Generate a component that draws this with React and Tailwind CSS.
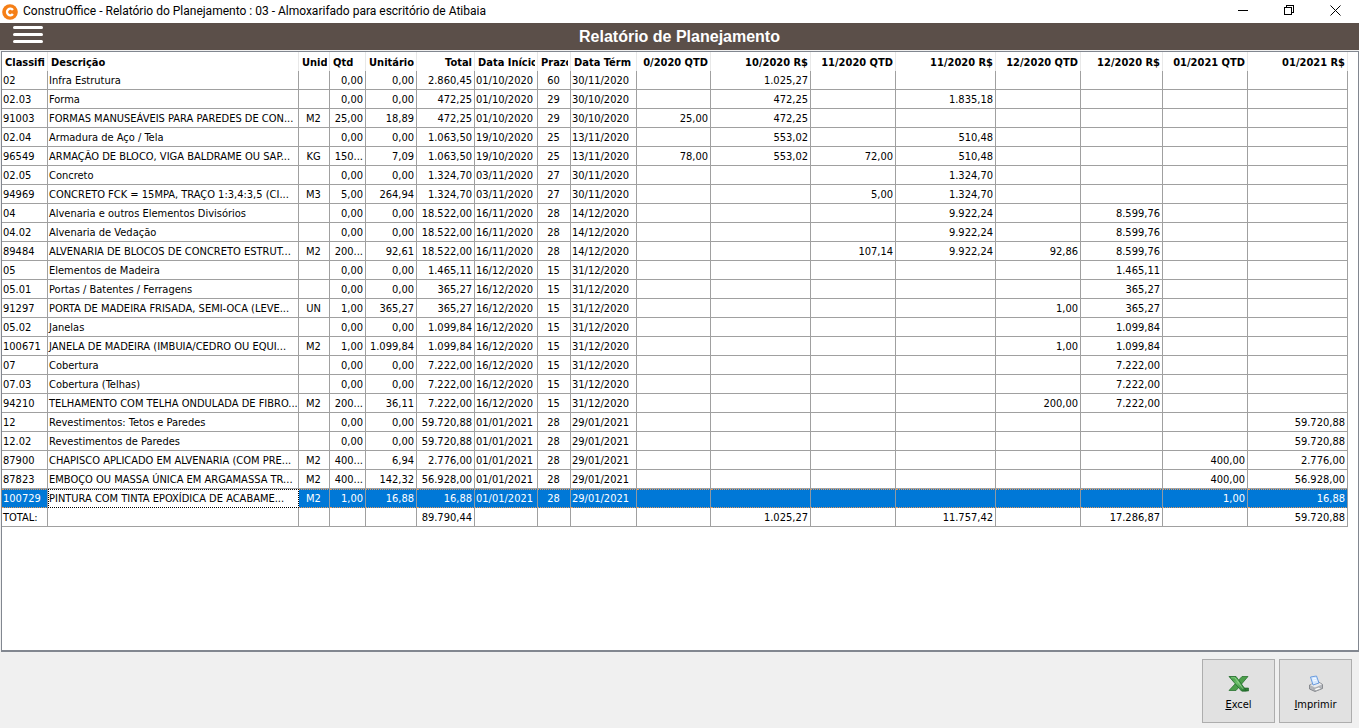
const columns = [
  { title: "Classifi", width: "w-[46px]", head: "justify-start", cell: "text-left" },
  { title: "Descrição", width: "w-[251px]", head: "justify-start", cell: "text-left" },
  { title: "Unid", width: "w-[31px]", head: "justify-start", cell: "text-center" },
  { title: "Qtd", width: "w-[36px]", head: "justify-start", cell: "text-right" },
  { title: "Unitário", width: "w-[51px]", head: "justify-end", cell: "text-right" },
  { title: "Total", width: "w-[58px]", head: "justify-end", cell: "text-right" },
  { title: "Data Início", width: "w-[63px]", head: "justify-start", cell: "text-left" },
  { title: "Prazo", width: "w-[33px]", head: "justify-start", cell: "text-center" },
  { title: "Data Térm", width: "w-[66px]", head: "justify-start", cell: "text-left" },
  { title: "0/2020 QTD", width: "w-[74px]", head: "justify-end", cell: "text-right" },
  { title: "10/2020 R$", width: "w-[100px]", head: "justify-end", cell: "text-right" },
  { title: "11/2020 QTD", width: "w-[85px]", head: "justify-end", cell: "text-right" },
  { title: "11/2020 R$", width: "w-[100px]", head: "justify-end", cell: "text-right" },
  { title: "12/2020 QTD", width: "w-[85px]", head: "justify-end", cell: "text-right" },
  { title: "12/2020 R$", width: "w-[82px]", head: "justify-end", cell: "text-right" },
  { title: "01/2021 QTD", width: "w-[85px]", head: "justify-end", cell: "text-right" },
  { title: "01/2021 R$", width: "w-[100px]", head: "justify-end", cell: "text-right" },
];

const rows = [
  ["02", "Infra Estrutura", "", "0,00", "0,00", "2.860,45", "01/10/2020", "60", "30/11/2020", "", "1.025,27", "", "", "", "", "", ""],
  ["02.03", "Forma", "", "0,00", "0,00", "472,25", "01/10/2020", "29", "30/10/2020", "", "472,25", "", "1.835,18", "", "", "", ""],
  ["91003", "FORMAS MANUSEÁVEIS PARA PAREDES DE CON...", "M2", "25,00", "18,89", "472,25", "01/10/2020", "29", "30/10/2020", "25,00", "472,25", "", "", "", "", "", ""],
  ["02.04", "Armadura de Aço / Tela", "", "0,00", "0,00", "1.063,50", "19/10/2020", "25", "13/11/2020", "", "553,02", "", "510,48", "", "", "", ""],
  ["96549", "ARMAÇÃO DE BLOCO, VIGA BALDRAME OU SAP...", "KG", "150...", "7,09", "1.063,50", "19/10/2020", "25", "13/11/2020", "78,00", "553,02", "72,00", "510,48", "", "", "", ""],
  ["02.05", "Concreto", "", "0,00", "0,00", "1.324,70", "03/11/2020", "27", "30/11/2020", "", "", "", "1.324,70", "", "", "", ""],
  ["94969", "CONCRETO FCK = 15MPA, TRAÇO 1:3,4:3,5 (CI...", "M3", "5,00", "264,94", "1.324,70", "03/11/2020", "27", "30/11/2020", "", "", "5,00", "1.324,70", "", "", "", ""],
  ["04", "Alvenaria e outros Elementos Divisórios", "", "0,00", "0,00", "18.522,00", "16/11/2020", "28", "14/12/2020", "", "", "", "9.922,24", "", "8.599,76", "", ""],
  ["04.02", "Alvenaria de Vedação", "", "0,00", "0,00", "18.522,00", "16/11/2020", "28", "14/12/2020", "", "", "", "9.922,24", "", "8.599,76", "", ""],
  ["89484", "ALVENARIA DE BLOCOS DE CONCRETO ESTRUT...", "M2", "200...", "92,61", "18.522,00", "16/11/2020", "28", "14/12/2020", "", "", "107,14", "9.922,24", "92,86", "8.599,76", "", ""],
  ["05", "Elementos de Madeira", "", "0,00", "0,00", "1.465,11", "16/12/2020", "15", "31/12/2020", "", "", "", "", "", "1.465,11", "", ""],
  ["05.01", "Portas / Batentes / Ferragens", "", "0,00", "0,00", "365,27", "16/12/2020", "15", "31/12/2020", "", "", "", "", "", "365,27", "", ""],
  ["91297", "PORTA DE MADEIRA FRISADA, SEMI-OCA (LEVE...", "UN", "1,00", "365,27", "365,27", "16/12/2020", "15", "31/12/2020", "", "", "", "", "1,00", "365,27", "", ""],
  ["05.02", "Janelas", "", "0,00", "0,00", "1.099,84", "16/12/2020", "15", "31/12/2020", "", "", "", "", "", "1.099,84", "", ""],
  ["100671", "JANELA DE MADEIRA (IMBUIA/CEDRO OU EQUI...", "M2", "1,00", "1.099,84", "1.099,84", "16/12/2020", "15", "31/12/2020", "", "", "", "", "1,00", "1.099,84", "", ""],
  ["07", "Cobertura", "", "0,00", "0,00", "7.222,00", "16/12/2020", "15", "31/12/2020", "", "", "", "", "", "7.222,00", "", ""],
  ["07.03", "Cobertura (Telhas)", "", "0,00", "0,00", "7.222,00", "16/12/2020", "15", "31/12/2020", "", "", "", "", "", "7.222,00", "", ""],
  ["94210", "TELHAMENTO COM TELHA ONDULADA DE FIBRO...", "M2", "200...", "36,11", "7.222,00", "16/12/2020", "15", "31/12/2020", "", "", "", "", "200,00", "7.222,00", "", ""],
  ["12", "Revestimentos: Tetos e Paredes", "", "0,00", "0,00", "59.720,88", "01/01/2021", "28", "29/01/2021", "", "", "", "", "", "", "", "59.720,88"],
  ["12.02", "Revestimentos de Paredes", "", "0,00", "0,00", "59.720,88", "01/01/2021", "28", "29/01/2021", "", "", "", "", "", "", "", "59.720,88"],
  ["87900", "CHAPISCO APLICADO EM ALVENARIA (COM PRE...", "M2", "400...", "6,94", "2.776,00", "01/01/2021", "28", "29/01/2021", "", "", "", "", "", "", "400,00", "2.776,00"],
  ["87823", "EMBOÇO OU MASSA ÚNICA EM ARGAMASSA TR...", "M2", "400...", "142,32", "56.928,00", "01/01/2021", "28", "29/01/2021", "", "", "", "", "", "", "400,00", "56.928,00"],
  ["100729", "PINTURA COM TINTA EPOXÍDICA DE ACABAME...", "M2", "1,00", "16,88", "16,88", "01/01/2021", "28", "29/01/2021", "", "", "", "", "", "", "1,00", "16,88"],
];

const totals = ["TOTAL:", "", "", "", "", "89.790,44", "", "", "", "", "1.025,27", "", "11.757,42", "", "17.286,87", "", "59.720,88"];

const selectedCode = "100729";

const cellBase = "h-[19px] overflow-hidden pr-[2px] pb-0 pl-[1px] whitespace-nowrap";
const cellPlain = "border-r border-b border-[#a0a0a0] pt-[2px]";
const cellSelected = "border-y border-r border-y-[#e39a5f] border-r-[#8f99a3] pt-[1px] [border-style:dotted_solid]";
const cellFocused =
  "border-y border-r border-white bg-white pt-[1px] text-black outline-1 -outline-offset-1 outline-dotted outline-black";

function AppLogo() {
  return (
    <svg width="16" height="16" viewBox="0 0 16 16" aria-hidden="true">
      <circle cx="8" cy="8" r="7.8" fill="#f57f17" />
      <path d="M10.9 6A3.3 3.3 0 1 0 10.9 10" fill="none" stroke="#fff" strokeWidth="2.3" />
    </svg>
  );
}

function ExcelIcon() {
  return (
    <svg width="22" height="18" viewBox="0 0 22 18" aria-hidden="true">
      <defs>
        <linearGradient id="excelFront" x1="0" y1="0" x2="1" y2="1">
          <stop offset="0" stopColor="#2f8c35" />
          <stop offset="0.45" stopColor="#6cc06a" />
          <stop offset="1" stopColor="#1f6d2a" />
        </linearGradient>
      </defs>
      <path d="M14 1.500h6L8 15.500H1z" fill="#4c9f4b" stroke="#2a7331" strokeWidth="0.8" />
      <path d="M16 13h4.500v3H14z" fill="#2f7d36" stroke="#1b5a24" strokeWidth="0.6" />
      <path d="M1 1.500h7L18.500 16h-5z" fill="url(#excelFront)" stroke="#1f6b2a" strokeWidth="0.8" />
      <path d="M3 2.800h4l8 11" fill="none" stroke="#a5dd9c" strokeWidth="0.7" />
    </svg>
  );
}

function PrinterIcon() {
  return (
    <svg width="16" height="18" viewBox="0 0 16 18" aria-hidden="true">
      <path d="M1.500 10L10 6.500l4.500 3v4L7 16.500l-5.500-2.500z" fill="#b4b7bc" stroke="#777a80" strokeWidth="0.8" />
      <path d="M2 10l8-3 4 2.500-7 3z" fill="#e9eaec" />
      <path d="M2.500 2l6-1 2.500 7-6 2z" fill="#d5e8ff" stroke="#5f94dd" strokeWidth="0.9" />
      <path d="M4.500 4l3.500-.6M5 6l3.700-.8" stroke="#fff" strokeWidth="0.8" />
      <path d="M5.500 14l5.500-2 2.500 1.500-5.500 2.200z" fill="#fafafa" stroke="#8b8e94" strokeWidth="0.6" />
    </svg>
  );
}

function TitleBar() {
  return (
    <div className="flex h-[23px] shrink-0 items-center bg-white pl-[2px]">
      <AppLogo />
      <span className="ml-[5px] font-['Roboto','Noto_Sans',sans-serif] text-[12px] leading-[23px] whitespace-nowrap">
        ConstruOffice - Relatório do Planejamento : 03 - Almoxarifado para escritório de Atibaia
      </span>
      <div className="ml-auto flex self-start pr-px">
        <button type="button" aria-label="Minimizar" className="flex h-[20px] w-[46px] items-center justify-center">
          <svg width="10" height="10" viewBox="0 0 10 10" fill="none" stroke="#000" shapeRendering="crispEdges">
            <path d="M0 5.500h10" />
          </svg>
        </button>
        <button type="button" aria-label="Restaurar" className="flex h-[20px] w-[46px] items-center justify-center">
          <svg width="10" height="10" viewBox="0 0 10 10" fill="none" stroke="#000" shapeRendering="crispEdges">
            <path d="M0.500 2.500h7v7h-7zM2.500 2.500v-2h7v7h-2" />
          </svg>
        </button>
        <button type="button" aria-label="Fechar" className="flex h-[20px] w-[46px] items-center justify-center">
          <svg width="11" height="11" viewBox="0 0 11 11" fill="none" stroke="#000">
            <path d="M0.500 0.500l10 10M10.500 0.500l-10 10" />
          </svg>
        </button>
      </div>
    </div>
  );
}

function ReportTable() {
  return (
    <table className="w-[1346px] table-fixed border-separate border-spacing-0 text-[11px] leading-[16px]">
      <colgroup>
        {columns.map((col) => (
          <col key={col.title} className={col.width} />
        ))}
      </colgroup>
      <thead>
        <tr>
          {columns.map((col) => (
            <th key={col.title} scope="col" className="h-[19px] border-r border-[#e8e8e8] pt-[2px] pr-[2px] pb-0 pl-[3px]">
              <div className={`flex overflow-hidden whitespace-nowrap ${col.head}`}>{col.title}</div>
            </th>
          ))}
        </tr>
      </thead>
      <tbody>
        {rows.map((row) => {
          const selected = row[0] === selectedCode;
          return (
            <tr key={row[0]} aria-selected={selected} className={selected ? "bg-[#0078d7] text-white" : ""}>
              {row.map((value, i) => (
                <td
                  key={columns[i].title}
                  className={`${cellBase} ${columns[i].cell} ${selected ? (i === 1 ? cellFocused : cellSelected) : cellPlain}`}
                >
                  {value}
                </td>
              ))}
            </tr>
          );
        })}
      </tbody>
      <tfoot>
        <tr>
          {totals.map((value, i) => (
            <td key={columns[i].title} className={`${cellBase} ${cellPlain} ${columns[i].cell}`}>
              {value}
            </td>
          ))}
        </tr>
      </tfoot>
    </table>
  );
}

export default function App() {
  return (
    <div className="flex h-screen flex-col overflow-hidden bg-[#f0f0f0] font-['DejaVu_Sans_Condensed','Noto_Sans',sans-serif] text-black">
      <TitleBar />

      <header className="grid h-[27px] shrink-0 grid-cols-[1fr_auto_1fr] items-center bg-[#5b4f49]">
        <button type="button" aria-label="Menu" className="ml-[13px] flex w-[30px] flex-col gap-[4px] pb-[4px]">
          <span className="h-[3px] rounded-full bg-white" />
          <span className="h-[3px] rounded-full bg-white" />
          <span className="h-[3px] rounded-full bg-white" />
        </button>
        <h1 className="font-['Liberation_Sans',Arial,sans-serif] text-[16px] leading-[27px] font-bold text-white">
          Relatório de Planejamento
        </h1>
      </header>

      {/* Report grid */}
      <main className="mt-px ml-px min-h-0 flex-1 overflow-hidden border border-b-2 border-[#828790] bg-white">
        <ReportTable />
      </main>

      <footer className="flex shrink-0 justify-end gap-[4px] pt-[7px] pr-[7px] pb-[5px] text-[11px] leading-[14px]">
        <button type="button" className="flex h-[64px] w-[73px] flex-col items-center justify-center gap-[5px] border border-[#adadad] bg-[#e1e1e1] pt-[5px]">
          <ExcelIcon />
          <span>
            <u>E</u>xcel
          </span>
        </button>
        <button type="button" className="flex h-[64px] w-[73px] flex-col items-center justify-center gap-[5px] border border-[#adadad] bg-[#e1e1e1] pt-[5px]">
          <PrinterIcon />
          <span>
            <u>I</u>mprimir
          </span>
        </button>
      </footer>
    </div>
  );
}
